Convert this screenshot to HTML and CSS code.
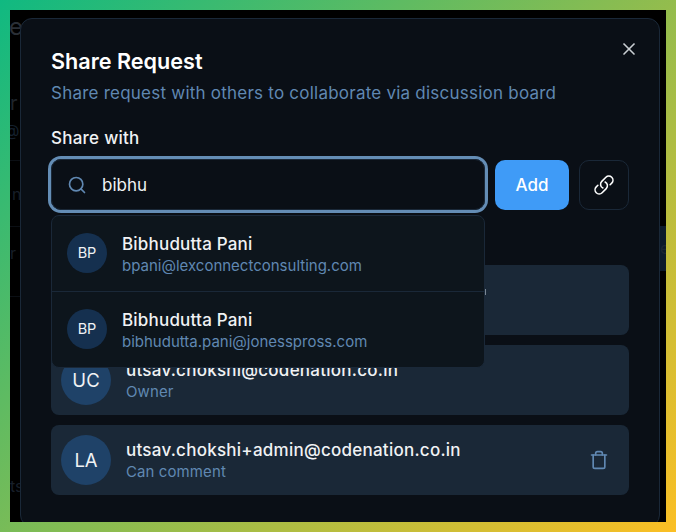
FILE: index.html
```html
<!DOCTYPE html>
<html lang="en">
<head>
<meta charset="utf-8">
<title>Share Request</title>
<link rel="stylesheet" href="styles.css">
</head>
<body>
<div class="window">
  <div class="ghost ghost-e">e</div>
  <div class="ghost ghost-r1">r</div>
  <div class="ghost ghost-at">@</div>
  <div class="ghost ghost-n">n</div>
  <div class="ghost ghost-r2">r</div>
  <div class="ghost ghost-ts">ts</div>
  <div class="ghost-line ghost-line-1"></div>
  <div class="ghost-line ghost-line-2"></div>
  <div class="ghost-line ghost-line-3"></div>
  <div class="ghost-panel">e</div>

  <section class="modal">
    <button class="close" aria-label="Close">
      <svg width="20" height="20" viewBox="0 0 24 24" fill="none" stroke="currentColor" stroke-width="2" stroke-linecap="round" stroke-linejoin="round"><path d="M18 6 6 18"/><path d="m6 6 12 12"/></svg>
    </button>
    <h2 class="title">Share Request</h2>
    <p class="subtitle">Share request with others to collaborate via discussion board</p>
    <div class="label">Share with</div>
    <div class="controls">
      <div class="combo">
        <div class="input">
          <svg class="search-icon" width="20" height="20" viewBox="0 0 24 24" fill="none" stroke="currentColor" stroke-width="2" stroke-linecap="round" stroke-linejoin="round"><circle cx="11" cy="11" r="8"/><path d="m21 21-4.3-4.3"/></svg>
          <span class="value">bibhu</span>
        </div>
        <div class="dropdown">
          <div class="option">
            <div class="avatar-sm">BP</div>
            <div class="option-text">
              <div class="option-name">Bibhudutta Pani</div>
              <div class="option-mail">bpani@lexconnectconsulting.com</div>
            </div>
          </div>
          <div class="option">
            <div class="avatar-sm">BP</div>
            <div class="option-text">
              <div class="option-name">Bibhudutta Pani</div>
              <div class="option-mail">bibhudutta.pani@jonesspross.com</div>
            </div>
          </div>
        </div>
      </div>
      <button class="add">Add</button>
      <button class="link" aria-label="Copy link">
        <svg width="22" height="22" viewBox="0 0 24 24" fill="none" stroke="currentColor" stroke-width="1.7" stroke-linecap="round" stroke-linejoin="round"><path d="M13.19 8.688a4.5 4.5 0 0 1 1.242 7.244l-4.5 4.5a4.5 4.5 0 0 1-6.364-6.364l1.757-1.757m13.35-.622 1.757-1.757a4.5 4.5 0 0 0-6.364-6.364l-4.5 4.5a4.5 4.5 0 0 0 1.242 7.244"/></svg>
      </button>
    </div>
    <div class="people">
      <div class="person"><div class="peek"></div></div>
      <div class="person">
        <div class="avatar">UC</div>
        <div class="person-text">
          <div class="person-name">utsav.chokshi@codenation.co.in</div>
          <div class="person-role">Owner</div>
        </div>
      </div>
      <div class="person">
        <div class="avatar">LA</div>
        <div class="person-text">
          <div class="person-name">utsav.chokshi+admin@codenation.co.in</div>
          <div class="person-role">Can comment</div>
        </div>
        <svg class="trash" width="20" height="20" viewBox="0 0 24 24" fill="none" stroke="currentColor" stroke-width="2" stroke-linecap="round" stroke-linejoin="round"><path d="M3 6h18"/><path d="M19 6v14a2 2 0 0 1-2 2H7a2 2 0 0 1-2-2V6"/><path d="M8 6V4a2 2 0 0 1 2-2h4a2 2 0 0 1 2 2v2"/></svg>
      </div>
    </div>
  </section>
</div>
</body>
</html>
```
FILE: styles.css
```css
* { box-sizing: border-box; }
html, body { height: 100%; }
body {
  margin: 0;
  padding: 10px;
  overflow: hidden;
  background: linear-gradient(135deg, #10b981 0%, #fbbf24 100%);
  font-family: Inter, "Noto Sans", sans-serif;
}
.window {
  position: relative;
  height: 512px;
  overflow: hidden;
  background: #000;
  padding: 8px 6px 0 10px;
}
.ghost {
  position: absolute;
  color: #171f29;
  font-size: 16px;
  line-height: 20px;
}
.ghost-e { left: -1px; top: 2px; font-size: 24px; line-height: 30px; color: #2a2f36; }
.ghost-r1 { left: 0; top: 83px; color: #1e242b; font-size: 20px; }
.ghost-at { left: -6px; top: 110px; color: #14202e; }
.ghost-n { left: 2px; top: 174px; }
.ghost-r2 { left: 0; top: 233px; }
.ghost-ts { left: 0; top: 466px; }
.ghost-line { position: absolute; left: 0; width: 10px; height: 1px; background: #0b0f14; }
.ghost-line-1 { top: 150px; }
.ghost-line-2 { top: 216px; }
.ghost-line-3 { top: 286px; }
.ghost-panel {
  position: absolute;
  right: 0;
  top: 216px;
  width: 6px;
  height: 45px;
  overflow: hidden;
  background: #0c1a2a;
  color: #1c2632;
  font-size: 16px;
  line-height: 45px;
}
.modal {
  position: relative;
  width: 640px;
  height: 509px;
  padding: 30px 30px 0;
  background: #0a0f16;
  border: 1px solid #1a2838;
  border-radius: 12px;
}
.close {
  position: absolute;
  right: 20px;
  top: 20px;
  display: flex;
  padding: 0;
  border: 0;
  background: none;
  color: #c9ced3;
}
.title {
  margin: 0;
  color: #fff;
  font-size: 21.6px;
  font-weight: 600;
  line-height: 24px;
}
.subtitle {
  margin: 8px 0 0;
  color: #6088b2;
  font-size: 17px;
  letter-spacing: 0.23px;
  line-height: 24px;
}
.label {
  margin-top: 22px;
  color: #f0f2f4;
  font-size: 17px;
  font-weight: 500;
  letter-spacing: 0.25px;
  line-height: 22px;
}
.controls {
  display: flex;
  gap: 10px;
  margin-top: 10px;
}
.combo { position: relative; width: 434px; }
.input {
  display: flex;
  align-items: center;
  height: 51px;
  padding-left: 15px;
  gap: 15px;
  border: 1px solid #1a2838;
  border-radius: 10px;
  box-shadow: 0 0 0 3px #648db5;
}
.search-icon { color: #6088b2; flex: none; }
.value { color: #f0f2f4; font-size: 17px; }
.dropdown {
  position: absolute;
  left: 0;
  top: 56px;
  z-index: 2;
  width: 434px;
  background: #0d151c;
  border: 1px solid #1a2838;
  border-radius: 8px;
}
.option {
  display: flex;
  align-items: center;
  gap: 15px;
  height: 75px;
  padding-left: 15px;
}
.option + .option { height: 76px; border-top: 1px solid #1a2838; }
.avatar-sm {
  display: flex;
  align-items: center;
  justify-content: center;
  width: 40px;
  height: 40px;
  margin-bottom: 2px;
  border-radius: 50%;
  background: #15304f;
  color: #f0f2f4;
  font-size: 14.5px;
}
.option-text { margin-top: 2px; }
.option-name { color: #f0f2f4; font-size: 17px; font-weight: 500; letter-spacing: 0.2px; line-height: 22px; }
.option-mail { color: #6088b2; font-size: 15px; line-height: 22px; }
.add, .link {
  display: flex;
  align-items: center;
  justify-content: center;
  height: 50px;
  margin-top: 1px;
  border-radius: 10px;
  font-family: inherit;
}
.add {
  width: 74px;
  border: 0;
  background: #3f9bf7;
  color: #fff;
  font-size: 17px;
  font-weight: 500;
}
.link {
  width: 50px;
  padding: 0;
  border: 1px solid #1a2838;
  background: none;
  color: #fff;
}
.people {
  display: flex;
  flex-direction: column;
  gap: 10px;
  margin-top: 55px;
}
.person {
  display: flex;
  align-items: center;
  gap: 15px;
  height: 70px;
  padding: 0 20px 0 10px;
  border-radius: 8px;
  background: #1a2837;
}
.avatar {
  display: flex;
  align-items: center;
  justify-content: center;
  width: 50px;
  height: 50px;
  flex: none;
  border-radius: 50%;
  background: #1f4268;
  color: #f0f2f4;
  font-size: 18.5px;
}
.person-text { flex: 1; }
.person-name { color: #f0f2f4; font-size: 17px; font-weight: 500; letter-spacing: 0.25px; line-height: 22px; }
.person-role { margin-top: 1px; color: #6088b2; font-size: 15px; letter-spacing: 0.1px; line-height: 20px; }
.trash { color: #6088b2; flex: none; }
.peek {
  width: 1px;
  height: 6px;
  margin: -16px 0 0 424px;
  background: #7a8794;
}
```
